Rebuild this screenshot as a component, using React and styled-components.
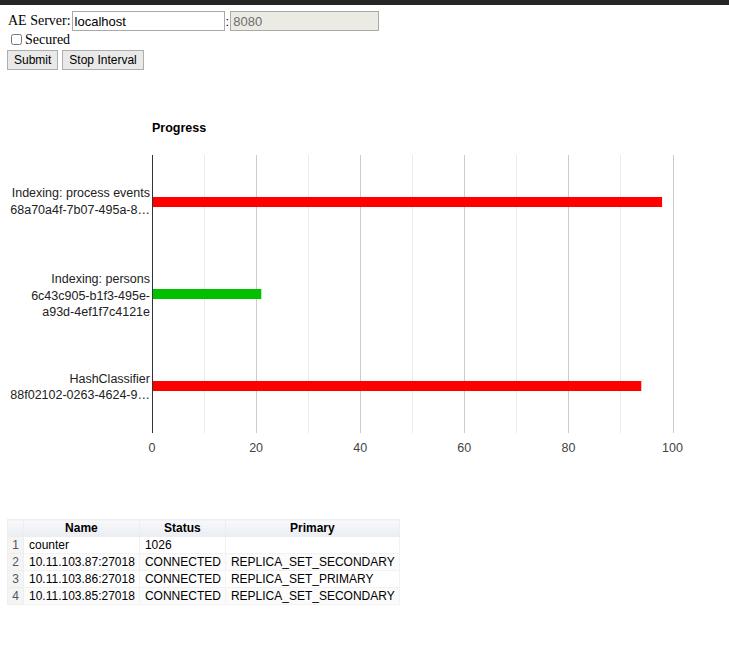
import React from 'react'
import styled, { createGlobalStyle } from 'styled-components'

const GlobalStyle = createGlobalStyle`
  body {
    margin: 0;
    background: #fff;
    font-family: "Liberation Serif", "Times New Roman", serif;
    font-size: 14px;
    color: #000;
  }
`

const TopBar = styled.div`
  height: 5px;
  background: #262626;
`

const Page = styled.div`
  padding: 6px 8px 0 8px;
`

const ServerRow = styled.div`
  display: flex;
  align-items: center;
  height: 20px;
`

const TextInput = styled.input`
  box-sizing: border-box;
  width: ${p => p.$width}px;
  height: 20px;
  margin: 0 0 0 ${p => p.$gap}px;
  padding: 0 2px;
  border: 1px solid #a9a9a9;
  font-family: "Liberation Sans", Arial, sans-serif;
  font-size: 13px;
  color: ${p => (p.disabled ? '#6d6d6d' : '#000')};
  background: ${p => (p.disabled ? '#ebebe4' : '#fff')};
`

const Colon = styled.span`
  font-family: "Liberation Sans", Arial, sans-serif;
  font-size: 13px;
  margin-left: 1px;
`

const CheckRow = styled.label`
  display: flex;
  align-items: center;
  height: 17px;
  input {
    width: 11px;
    height: 11px;
    margin: 0 3px 0 3px;
  }
`

const ButtonRow = styled.div`
  display: flex;
  gap: 4px;
  margin-left: -1px;
  margin-top: 2px;
`

const Button = styled.button`
  box-sizing: border-box;
  height: 20px;
  padding: 0 6px;
  border: 1px solid #adadad;
  background: #e9e9e9;
  font-family: "Liberation Sans", Arial, sans-serif;
  font-size: 12px;
  color: #000;
`

const ChartBox = styled.div`
  margin: 10px 0 0 -8px;
  height: 439px;
  svg {
    display: block;
    font-family: "Liberation Sans", Arial, sans-serif;
  }
`

const Table = styled.table`
  margin-left: -1px;
  border-collapse: collapse;
  font-family: "Liberation Sans", Arial, sans-serif;
  font-size: 12px;
  color: #000;
  border: 1px solid #eee;
`

const Th = styled.th`
  height: 16px;
  padding: 0 4px;
  font-weight: bold;
  text-align: center;
  border: 1px solid #eee;
  background: linear-gradient(#f8f9fb, #eaedf3);
  width: ${p => p.$w || 'auto'};
`

const Tr = styled.tr`
  background: ${p => (p.$odd ? '#fff' : '#fbfbfb')};
`

const Td = styled.td`
  height: 16px;
  padding: 0 4px 0 5px;
  white-space: nowrap;
  border: 1px solid #f2f2f2;
`

const NumTd = styled.td`
  height: 16px;
  padding: 0 4px;
  text-align: right;
  color: #555;
  background: #f4f4f4;
  border: 1px solid #eee;
`

const tasks = [
  { lines: ['Indexing: process events', '68a70a4f-7b07-495a-8…'], value: 98, color: '#ff0000', base: [197, 214] },
  { lines: ['Indexing: persons', '6c43c905-b1f3-495e-', 'a93d-4ef1f7c4121e'], value: 21, color: '#00c000', base: [283, 299.5, 316] },
  { lines: ['HashClassifier', '88f02102-0263-4624-9…'], value: 94, color: '#ff0000', base: [383, 399] },
]

const rows = [
  ['counter', '1026', ''],
  ['10.11.103.87:27018', 'CONNECTED', 'REPLICA_SET_SECONDARY'],
  ['10.11.103.86:27018', 'CONNECTED', 'REPLICA_SET_PRIMARY'],
  ['10.11.103.85:27018', 'CONNECTED', 'REPLICA_SET_SECONDARY'],
]

// chart coordinates are page y minus the chart top
const TOP = 80
const X0 = 152
const UNIT = 5.205
const barY = [197, 289, 381]

function ProgressChart() {
  const grid = []
  for (let i = 1; i <= 10; i++) {
    const x = Math.round(X0 + i * 10 * UNIT) + 0.5
    grid.push(
      <line key={i} x1={x} x2={x} y1={155 - TOP} y2={433 - TOP} stroke={i % 2 === 0 ? '#cccccc' : '#ebebeb'} strokeWidth="1" />
    )
  }
  const ticks = [0, 20, 40, 60, 80, 100]
  return (
    <svg width="729" height="439">
      <text x={X0} y={132 - TOP} fontSize="12.5" fontWeight="bold" fill="#000">Progress</text>
      {grid}
      {tasks.map((t, i) => (
        <rect key={i} x={X0} y={barY[i] - TOP} width={t.value * UNIT} height="10" fill={t.color} />
      ))}
      <line x1={X0 + 0.5} x2={X0 + 0.5} y1={155 - TOP} y2={433 - TOP} stroke="#333" strokeWidth="1" />
      {tasks.map((t, i) => (
        <text key={i} textAnchor="end" fontSize="12.5" fill="#222">
          {t.lines.map((l, j) => (
            <tspan key={j} x={150} y={t.base[j] - TOP}>{l}</tspan>
          ))}
        </text>
      ))}
      {ticks.map(v => (
        <text key={v} x={X0 + v * UNIT} y={452 - TOP} textAnchor="middle" fontSize="12.5" fill="#444">{v}</text>
      ))}
    </svg>
  )
}

export default function App() {
  return (
    <>
      <GlobalStyle />
      <TopBar />
      <Page>
        <ServerRow>
          AE Server:
          <TextInput $width={153} $gap={1} defaultValue="localhost" />
          <Colon>:</Colon>
          <TextInput $width={149} $gap={1} defaultValue="8080" disabled />
        </ServerRow>
        <CheckRow>
          <input type="checkbox" />
          Secured
        </CheckRow>
        <ButtonRow>
          <Button>Submit</Button>
          <Button>Stop Interval</Button>
        </ButtonRow>
        <ChartBox>
          <ProgressChart />
        </ChartBox>
        <Table>
          <thead>
            <tr>
              <Th $w="7px"></Th>
              <Th>Name</Th>
              <Th>Status</Th>
              <Th>Primary</Th>
            </tr>
          </thead>
          <tbody>
            {rows.map((r, i) => (
              <Tr key={i} $odd={i % 2 === 0}>
                <NumTd>{i + 1}</NumTd>
                {r.map((c, j) => (
                  <Td key={j}>{c}</Td>
                ))}
              </Tr>
            ))}
          </tbody>
        </Table>
      </Page>
    </>
  )
}
